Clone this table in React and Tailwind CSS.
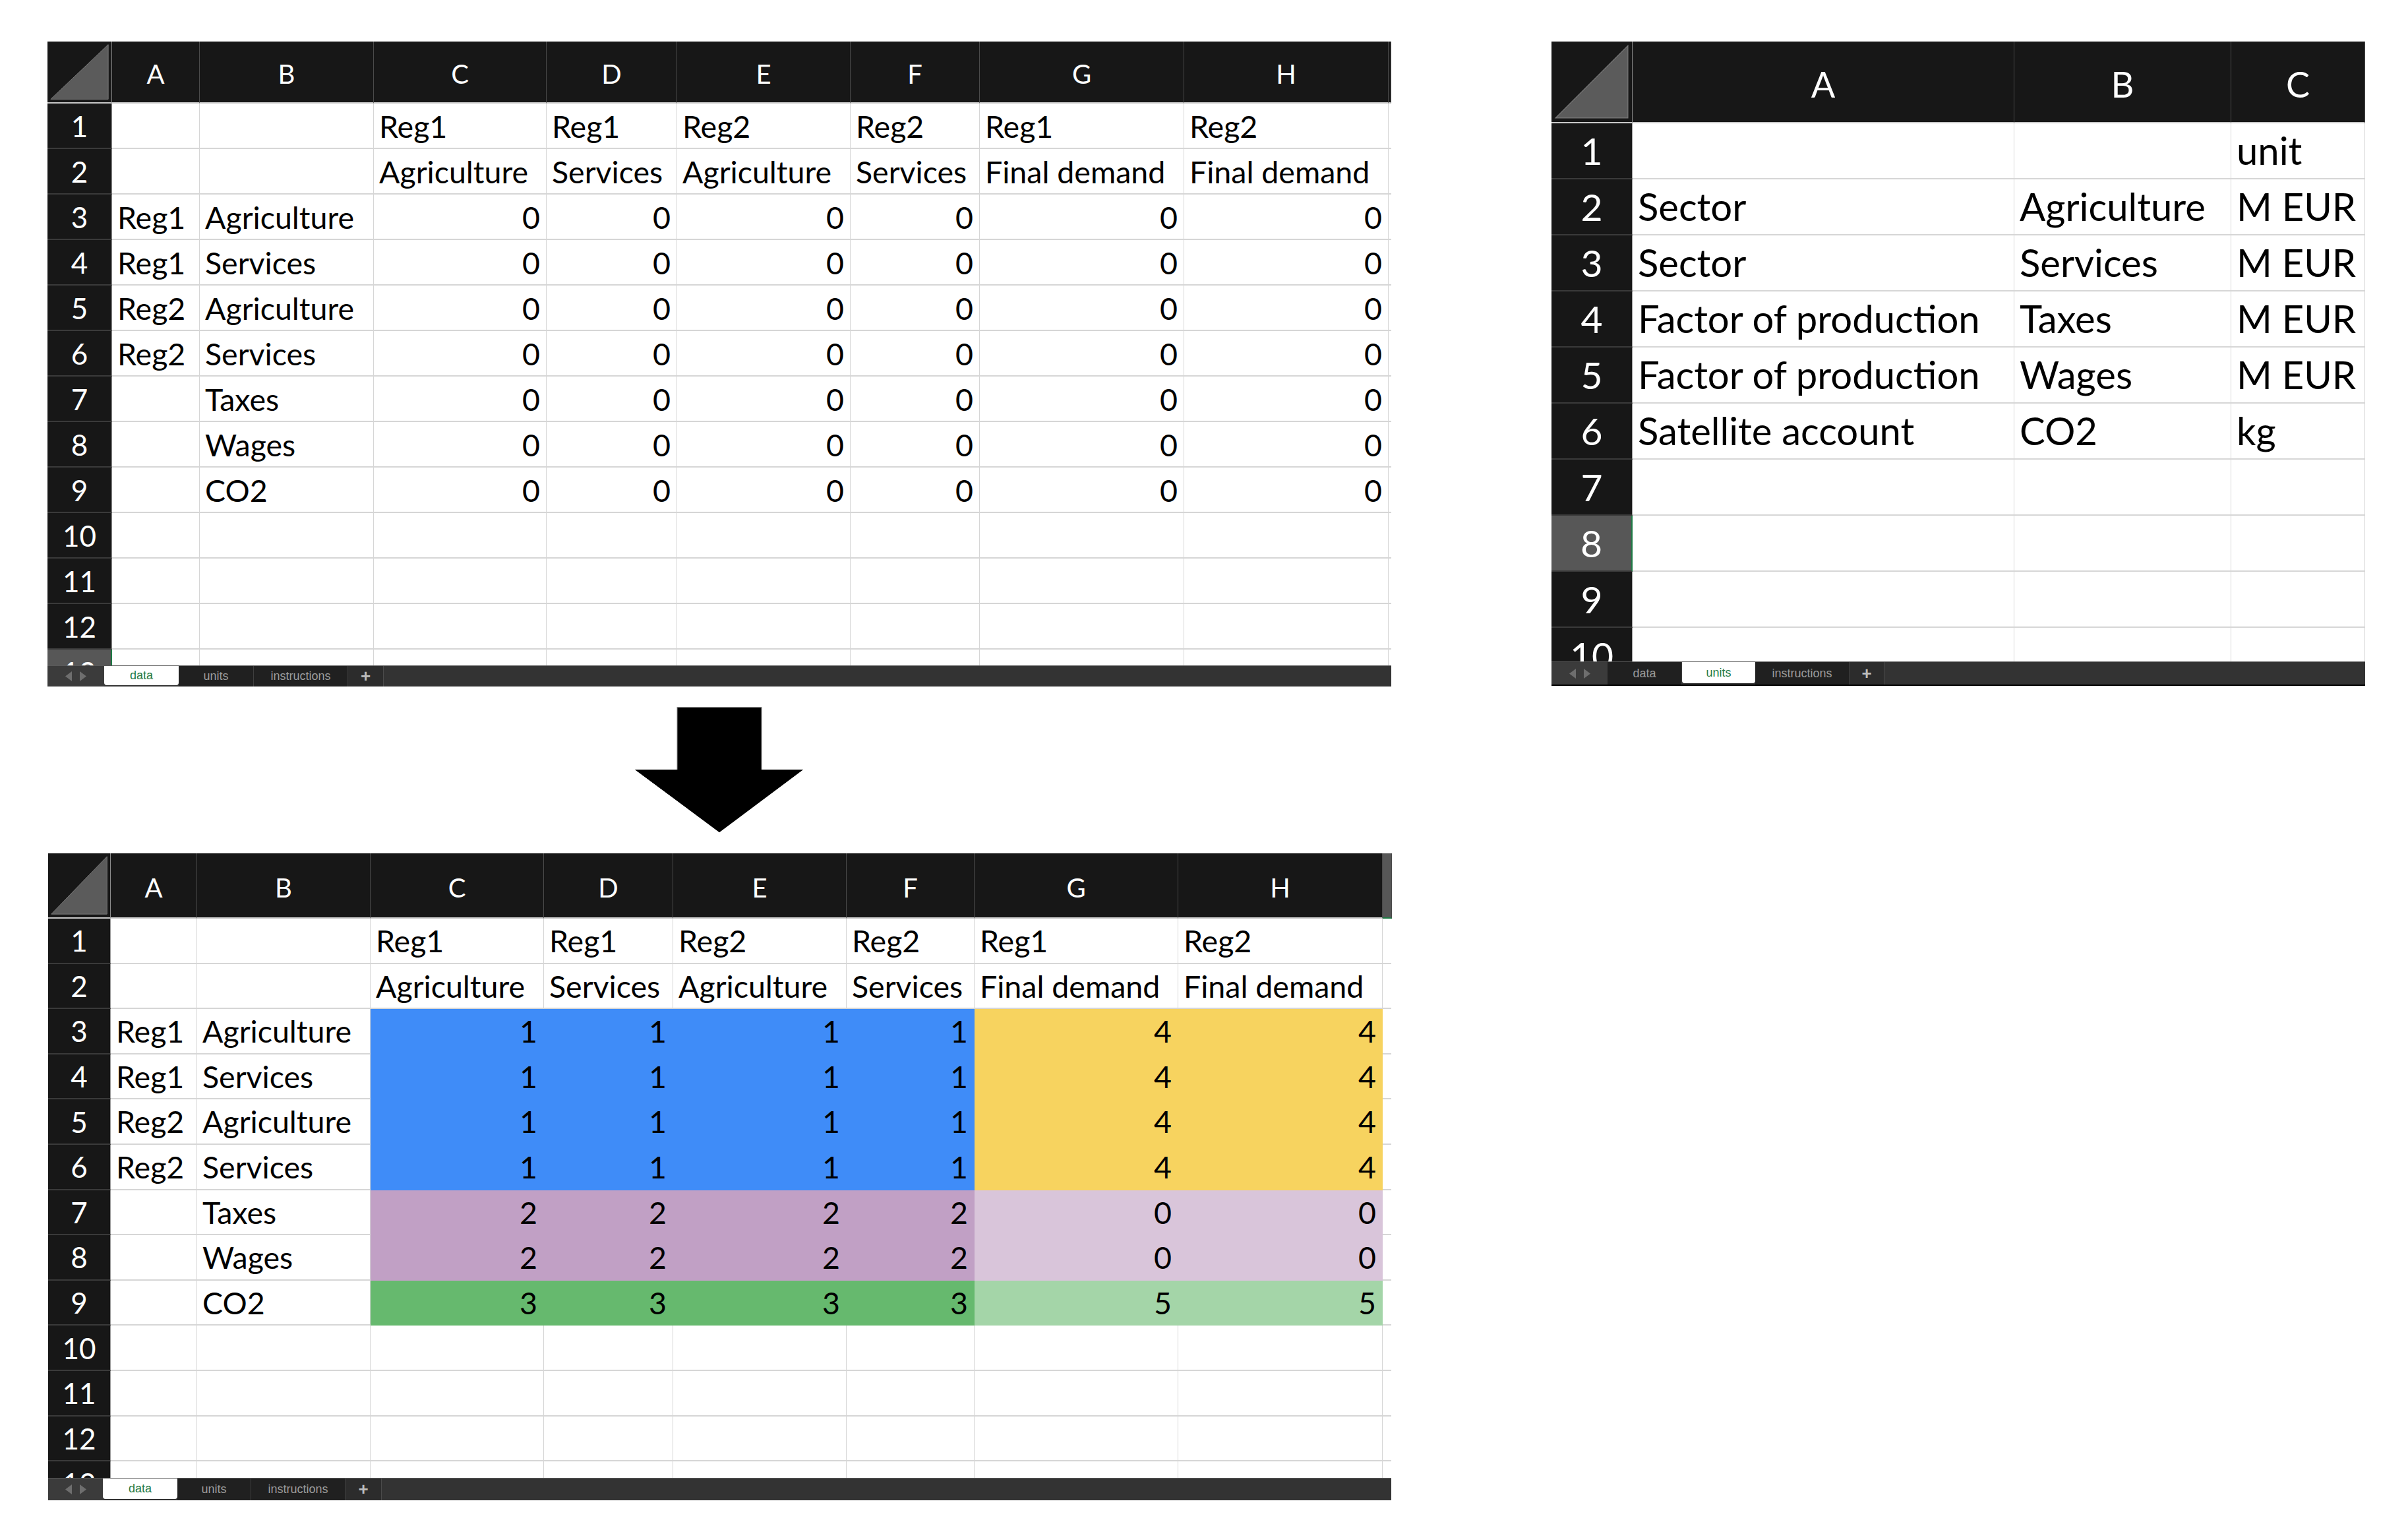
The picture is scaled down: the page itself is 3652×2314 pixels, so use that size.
import React from "react";

// colours used for the filled blocks of the result sheet
const BLUE = "bg-[#3f8cf8]";
const YELLOW = "bg-[#f7d35f]";
const PURPLE = "bg-[#c1a0c5]";
const PURPLE_LT = "bg-[#d9c5da]";
const GREEN = "bg-[#66b96e]";
const GREEN_LT = "bg-[#a4d5a8]";

const HEAD_ROWS = [
  ["", "", "Reg1", "Reg1", "Reg2", "Reg2", "Reg1", "Reg2"],
  ["", "", "Agriculture", "Services", "Agriculture", "Services", "Final demand", "Final demand"],
];
const LABELS = [
  ["Reg1", "Agriculture"],
  ["Reg1", "Services"],
  ["Reg2", "Agriculture"],
  ["Reg2", "Services"],
  ["", "Taxes"],
  ["", "Wages"],
  ["", "CO2"],
];

// empty input sheet: all zeros
const emptyRows = [
  ...HEAD_ROWS,
  ...LABELS.map((l) => [...l, 0, 0, 0, 0, 0, 0]),
  [], [], [], [],
];

// filled sheet, one colour per block
const block = (v, bg) => ({ v, bg });
const filledRows = [
  ...HEAD_ROWS,
  ...LABELS.slice(0, 4).map((l) => [
    ...l,
    block(1, BLUE), block(1, BLUE), block(1, BLUE), block(1, BLUE),
    block(4, YELLOW), block(4, YELLOW),
  ]),
  ...LABELS.slice(4, 6).map((l) => [
    ...l,
    block(2, PURPLE), block(2, PURPLE), block(2, PURPLE), block(2, PURPLE),
    block(0, PURPLE_LT), block(0, PURPLE_LT),
  ]),
  [
    ...LABELS[6],
    block(3, GREEN), block(3, GREEN), block(3, GREEN), block(3, GREEN),
    block(5, GREEN_LT), block(5, GREEN_LT),
  ],
  [], [], [], [],
];

const unitRows = [
  ["", "", "unit"],
  ["Sector", "Agriculture", "M EUR"],
  ["Sector", "Services", "M EUR"],
  ["Factor of production", "Taxes", "M EUR"],
  ["Factor of production", "Wages", "M EUR"],
  ["Satellite account", "CO2", "kg"],
  [], [], [], [],
];

const TOP_CFG = {
  width: "w-[2038px]",
  rownumW: "w-[98px]",
  headH: "h-[94px]",
  rowH: "h-[69px]",
  bodyH: "h-[852px]",
  headText: "text-[40px] pt-[6px]",
  numText: "text-[44px]",
  cellText: "text-[46.5px] pb-[10px]",
  selRow: 12,
  cols: [
    { l: "A", w: "w-[133px]" },
    { l: "B", w: "w-[264px]" },
    { l: "C", w: "w-[262px]" },
    { l: "D", w: "w-[198px]" },
    { l: "E", w: "w-[263px]" },
    { l: "F", w: "w-[196px]" },
    { l: "G", w: "w-[310px]" },
    { l: "H", w: "w-[310px]" },
    { l: "", w: "w-[4px]" },
  ],
  tab: {
    h: "h-[32px]",
    navW: "w-[86px]",
    tabs: ["w-[113px]", "w-[114px]", "w-[143px]"],
    plusW: "w-[54px]",
    active: 0,
    bottom: "",
  },
};

const BOTTOM_CFG = {
  ...TOP_CFG,
  rownumW: "w-[95px]",
  headH: "h-[99px]",
  rowH: "h-[68.6px]",
  bodyH: "h-[848px]",
  selRow: -1,
  cols: [
    { l: "A", w: "w-[131px]" },
    { l: "B", w: "w-[263px]" },
    { l: "C", w: "w-[263px]" },
    { l: "D", w: "w-[196px]" },
    { l: "E", w: "w-[263px]" },
    { l: "F", w: "w-[194px]" },
    { l: "G", w: "w-[309px]" },
    { l: "H", w: "w-[310px]" },
    { l: "", w: "w-[14px]", hb: "bg-[#575757] border-b-[#1e7b45]" },
  ],
  tab: { ...TOP_CFG.tab, h: "h-[34px]", navW: "w-[83px]", tabs: ["w-[113px]", "w-[112px]", "w-[143px]"], plusW: "w-[55px]" },
};

const UNITS_CFG = {
  width: "w-[1234px]",
  rownumW: "w-[123px]",
  headH: "h-[124px]",
  rowH: "h-[85px]",
  bodyH: "h-[816px]",
  headText: "text-[54px] pt-[8px]",
  numText: "text-[57px]",
  cellText: "text-[58px] pb-[13px]",
  selRow: 7,
  cols: [
    { l: "A", w: "w-[579px]" },
    { l: "B", w: "w-[329px]" },
    { l: "C", w: "w-[203px]" },
  ],
  tab: {
    h: "h-[37px]",
    navW: "w-[85px]",
    tabs: ["w-[113px]", "w-[111px]", "w-[143px]"],
    plusW: "w-[53px]",
    active: 1,
    bottom: "border-b-2 border-b-black",
  },
};

const TAB_LABELS = ["data", "units", "instructions"];

function Corner({ w }) {
  return (
    <div className={`${w} shrink-0 bg-[#171717] border-r border-r-[#8a8a8a] border-b-2 border-b-[#c9c9c9]`}>
      <svg viewBox="0 0 100 100" preserveAspectRatio="none" className="w-full h-full">
        <polygon points="5,95 95,95 95,5" fill="#5b5b5b" stroke="#7a7a7a" strokeWidth="1" />
      </svg>
    </div>
  );
}

function TabBar({ tab }) {
  return (
    <div className={`flex shrink-0 ${tab.h} bg-[#333333] border-t border-[#5a5a5a] ${tab.bottom} font-['Liberation_Sans',Arial,sans-serif] text-[18px]`}>
      <div className={`${tab.navW} shrink-0 flex items-center justify-center gap-[12px] bg-[#3b3b3b]`}>
        <svg width="10" height="15" viewBox="0 0 10 15">
          <polygon points="10,0 10,15 0,7.5" fill="#6e6e6e" />
        </svg>
        <svg width="10" height="15" viewBox="0 0 10 15">
          <polygon points="0,0 0,15 10,7.5" fill="#6e6e6e" />
        </svg>
      </div>
      {tab.tabs.map((w, i) =>
        i === tab.active ? (
          <div key={i} className={`${w} shrink-0 bg-white rounded-b-[4px] flex items-center justify-center text-[#1f7a45] mb-[2px]`}>
            {TAB_LABELS[i]}
          </div>
        ) : (
          <div key={i} className={`${w} shrink-0 bg-[#202020] border-r border-[#3e3e3e] flex items-center justify-center text-[#9b9b9b]`}>
            {TAB_LABELS[i]}
          </div>
        )
      )}
      <div className={`${tab.plusW} shrink-0 bg-[#2c2c2c] border-r border-[#4a4a4a] flex items-center justify-center text-[#bdbdbd] text-[26px] font-bold`}>
        +
      </div>
    </div>
  );
}

function Cell({ w, cell, cls }) {
  const v = cell && typeof cell === "object" ? cell.v : cell;
  const bg = cell && typeof cell === "object" ? cell.bg : "";
  const num = typeof v === "number";
  return (
    <div
      className={`${w} shrink-0 flex items-end whitespace-nowrap overflow-hidden leading-none text-black border-r border-b-2 ${cls} ${
        bg ? `${bg} border-transparent` : "border-[#d6d6d6]"
      } ${num ? "justify-end pr-[9px]" : "pl-[8px]"}`}
    >
      {v}
    </div>
  );
}

function Sheet({ cfg, rows }) {
  return (
    <div className={`${cfg.width} flex flex-col shrink-0`}>
      <div className={`flex shrink-0 ${cfg.headH}`}>
        <Corner w={cfg.rownumW} />
        {cfg.cols.map((c, i) => (
          <div
            key={i}
            className={`${c.w} shrink-0 ${c.hb || "bg-[#171717] border-b-[#c9c9c9]"} border-r border-r-[#4a4a4a] border-b-2 flex items-center justify-center text-white leading-none ${cfg.headText}`}
          >
            {c.l}
          </div>
        ))}
      </div>
      <div className={`${cfg.bodyH} overflow-hidden`}>
        {rows.map((r, ri) => (
          <div key={ri} className={`flex ${cfg.rowH}`}>
            <div
              className={`${cfg.rownumW} shrink-0 flex items-center justify-center text-white leading-none border-b-2 border-b-[#3a3a3a] ${cfg.numText} ${
                ri === cfg.selRow ? "bg-[#575757] border-r-2 border-r-[#1e7b45]" : "bg-[#171717] border-r border-r-[#9a9a9a]"
              }`}
            >
              {ri + 1}
            </div>
            {cfg.cols.map((c, ci) => (
              <Cell key={ci} w={c.w} cell={r[ci]} cls={cfg.cellText} />
            ))}
          </div>
        ))}
      </div>
      <TabBar tab={cfg.tab} />
    </div>
  );
}

export default function App() {
  return (
    <div className="w-[3652px] h-[2314px] bg-white flex items-start pt-[63px] pl-[72px] font-['Lato',sans-serif]">
      <div className="flex flex-col w-[2038px] shrink-0">
        <Sheet cfg={TOP_CFG} rows={emptyRows} />
        <div className="flex justify-center mt-[31px] mb-[31px]">
          <svg width="256" height="191" viewBox="0 0 256 191">
            <polygon points="64,0 192,0 192,95 255,95 128,190 0,95 64,95" fill="#000" />
            <rect x="64" y="0.5" width="128" height="95" fill="none" stroke="#8a8a8a" strokeWidth="1" />
            <polygon points="0,95 255,95 128,190" fill="#000" />
          </svg>
        </div>
        <div className="pl-[1px]">
          <Sheet cfg={{ ...BOTTOM_CFG, width: "w-[2037px]" }} rows={filledRows} />
        </div>
      </div>
      <div className="ml-[243px]">
        <Sheet cfg={UNITS_CFG} rows={unitRows} />
      </div>
    </div>
  );
}
